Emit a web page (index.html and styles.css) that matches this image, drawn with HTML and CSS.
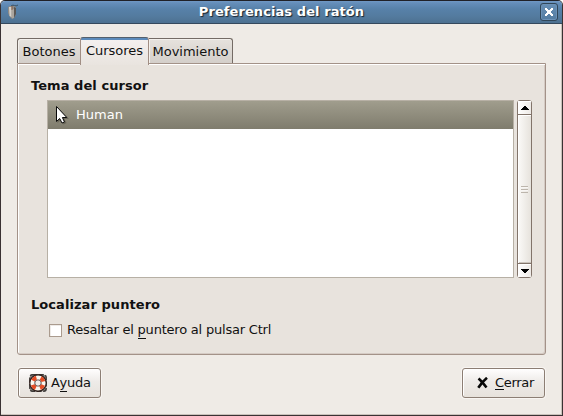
FILE: index.html
```html
<!DOCTYPE html>
<html lang="es">
<head>
<meta charset="utf-8">
<title>Preferencias del ratón</title>
<link rel="stylesheet" href="styles.css">
</head>
<body>
<div class="window">
  <header class="titlebar">
    <svg class="app-icon" width="14" height="16" viewBox="0 0 14 16"><path d="M4 2Q6 .5 7.5 1.5T11 1" fill="none" stroke="#3d5263"/><path d="M1 3L3 2H7L9 3V10L7.5 13.5L5 15L2.5 12.5L1 9Z" fill="#8f8b86"/><path d="M2 3H4.5V13.5L2.5 11.5Z" fill="#d5d2cc"/><path d="M5 5H7V14L5 14.5Z" fill="#aaa59e"/><path d="M7 3L9 4V10L7 14Z" fill="#5a5755"/><path d="M5 2V6" stroke="#8b6049"/></svg>
    <h1 class="title">Preferencias del ratón</h1>
    <button class="close" aria-label="Cerrar ventana"><svg width="8" height="8" viewBox="0 0 8 8" shape-rendering="crispEdges"><path d="M0 0H2V1H3V2H5V1H6V0H8V2H7V3H6V5H7V6H8V8H6V7H5V6H3V7H2V8H0V6H1V5H2V3H1V2H0Z" fill="#fff"/></svg></button>
  </header>
  <main class="content">
    <nav class="tabs">
      <button class="tab first"><span>Botones</span></button>
      <button class="tab active"><span>Cursores</span></button>
      <button class="tab last"><span>Movimiento</span></button>
    </nav>
    <section class="panel">
      <h2 class="heading theme-heading">Tema del cursor</h2>
      <div class="list-row">
        <div class="list">
          <div class="item">
            <svg class="pointer" width="15" height="21" viewBox="0 0 15 21"><path d="M2.5 2.5V18L5.8 15L8.5 19.5L11.5 18L9.5 14H14Z" fill="#444238" opacity=".45"/><path d="M1.5 1.5V16.5L4.7 13.5L7 18L9.5 17L7.4 12.5H11.8Z" fill="#fff" stroke="#080808"/></svg>
            <span>Human</span>
          </div>
        </div>
        <div class="scrollbar">
          <div class="step up"><svg width="8" height="4" viewBox="0 0 8 4" shape-rendering="crispEdges"><path d="M3 0H5V1H6V2H7V3H8V4H0V3H1V2H2V1H3Z"/></svg></div>
          <div class="thumb"><div class="grip"></div></div>
          <div class="step down"><svg width="8" height="4" viewBox="0 0 8 4" shape-rendering="crispEdges"><path d="M0 0H8V1H7V2H6V3H5V4H3V3H2V2H1V1H0Z"/></svg></div>
        </div>
      </div>
      <h2 class="heading locate-heading">Localizar puntero</h2>
      <label class="check"><span class="box"></span><span class="check-text">Resaltar el <span class="key">p</span>untero al pulsar Ctrl</span></label>
    </section>
    <footer class="actions">
      <button class="action help"><svg width="20" height="20" viewBox="0 0 20 20"><rect x="1.8" y="1.8" width="16.4" height="16.4" rx="2.5" fill="#8f8a85" stroke="#3d3a38" stroke-width="1.4" stroke-dasharray="5 1.5"/><circle cx="10" cy="10" r="5.8" fill="none" stroke="#30211d" stroke-width="6.2"/><circle cx="10" cy="10" r="3.2" fill="#f1eeeb" stroke="#4a3a35" stroke-width=".8"/><circle cx="10" cy="10" r="5.6" fill="none" stroke="#faf7ef" stroke-width="4"/><circle cx="10" cy="10" r="5.6" fill="none" stroke="#e54d25" stroke-width="4" stroke-dasharray="4.4 4.396" transform="rotate(22 10 10)"/></svg><span class="label"><span>A</span><span class="key">y</span>uda</span></button>
      <button class="action quit"><svg width="14" height="12" viewBox="0 0 14 12"><path d="M2.5 1.5Q5.5 4 10.5 10.5M11 .8Q6 5 2.3 10.8" fill="none" stroke="#080808" stroke-width="2.6"/></svg><span class="label"><span class="key high">C</span>errar</span></button>
    </footer>
  </main>
</div>
</body>
</html>
```
FILE: styles.css
```css
* { box-sizing: border-box; }
body { margin: 0; background: #fff; font: 13px/16px "DejaVu Sans", sans-serif; color: #111; }
button { font: inherit; color: inherit; padding: 0; margin: 0; }
h1, h2 { margin: 0; }
svg { display: block; flex: none; }
span { white-space: nowrap; }
.window { width: 563px; height: 416px; border: 1px solid #3a3233; border-top-color: #202127; border-radius: 5px 5px 0 0; background: #efebe6; box-shadow: inset -1px -1px #c9c1ba; overflow: hidden; }
.titlebar { height: 23px; display: flex; align-items: center; background: linear-gradient(#7098c5 0, #658eba 2px, #5781a9 8px, #547b9f 15px, #4d7191 22px); border-bottom: 1px solid #35495d; }
.app-icon { width: 14px; margin-left: 6px; }
.title { flex: 1; text-align: center; font-size: 13px; line-height: 20px; letter-spacing: .08px; padding-left: 2px; color: #fff; text-shadow: 1px 1px 1px #19232d; }
.close { width: 18px; height: 18px; margin-right: 4px; display: grid; place-items: center; border: 1px solid #304658; border-radius: 3px; background: linear-gradient(#688fb5, #537ca1); box-shadow: inset 0 0 0 1px #6b91b7; }
.content { padding: 12px 16px 0; }
.tabs { height: 28px; display: flex; align-items: flex-end; position: relative; z-index: 1; }
.tab { height: 25px; margin-bottom: 1px; padding-top: 1px; border: 1px solid #746b65; border-bottom: 0; background: linear-gradient(#e6e2dd, #d4cfca); box-shadow: inset 1px 1px #f3f0ec; white-space: nowrap; }
.first { width: 63px; border-radius: 3px 0 0; border-right: 0; }
.active { width: 69px; height: 28px; margin-bottom: -1px; padding: 0 0 1px; border-color: #54606c #a18e84; border-radius: 3px 3px 0 0; background: linear-gradient(#5c8bbb 2px, #f4f0ef 2px, #e9e4df); box-shadow: none; }
.last { width: 84px; border-left: 0; border-radius: 0 3px 0 0; }
.panel { width: 529px; height: 292px; margin-top: -1px; padding: 13px; border: 1px solid #a39288; border-radius: 0 0 3px 3px; background: #e8e3dd; box-shadow: inset 1px 1px #fff, inset -1px -1px #d5cbc4; }
.heading { font-size: 13px; line-height: 18px; height: 18px; letter-spacing: .06px; }
.list-row { display: flex; gap: 3px; margin: 5px 0 0 16px; height: 178px; }
.list { width: 467px; border: 1px solid #b7b0a5; background: #fff; }
.item { display: flex; align-items: center; height: 28px; color: #fff; background: linear-gradient(#a09d8d, #7f7c6d); }
.pointer { margin: 0 6px 0 7px; }
.scrollbar { width: 15px; display: flex; flex-direction: column; border: 1px solid #82746a; border-radius: 3px; background: #eee; }
.step { height: 13px; display: grid; place-items: center; background: linear-gradient(90deg, #fff, #eeeae6); box-shadow: inset 1px 1px #fff; }
.thumb { flex: 1; display: grid; place-items: center; border: solid #82746a; border-width: 1px 0; background: linear-gradient(90deg, #fbfaf8, #e6e2dc); box-shadow: inset 1px 1px #fff, inset 0 -1px #cbc4bc; }
.grip { width: 7px; height: 7px; background: repeating-linear-gradient(#bcb5ac 0 1px, #f8f6f4 1px 2px, transparent 2px 3px); }
.locate-heading { margin-top: 18px; }
.check { display: flex; align-items: center; height: 18px; margin: 7px 0 0 18px; }
.check-text { letter-spacing: -.21px; }
.box { width: 13px; height: 13px; border: 1px solid #aa9b8e; background: #fff; box-shadow: inset 1px 1px #eeebe8; margin-right: 5px; }
.key { display: inline-block; height: 17px; border-bottom: 1px solid #111; }
.high { height: 15px; }
.actions { display: flex; justify-content: space-between; margin: 13px 1px 0; width: 527px; }
.action { width: 83px; height: 30px; display: flex; align-items: center; border: 1px solid #8c7e74; border-radius: 3px; background: linear-gradient(#fffefe, #eeebe8 45%, #e7e2dc); box-shadow: 0 0 0 1px #f8f5f2, inset 1px 1px #fff; }
.label { letter-spacing: -.3px; }
.help { padding-left: 9px; gap: 3px; }
.quit { padding-left: 13px; gap: 5px; }
```
